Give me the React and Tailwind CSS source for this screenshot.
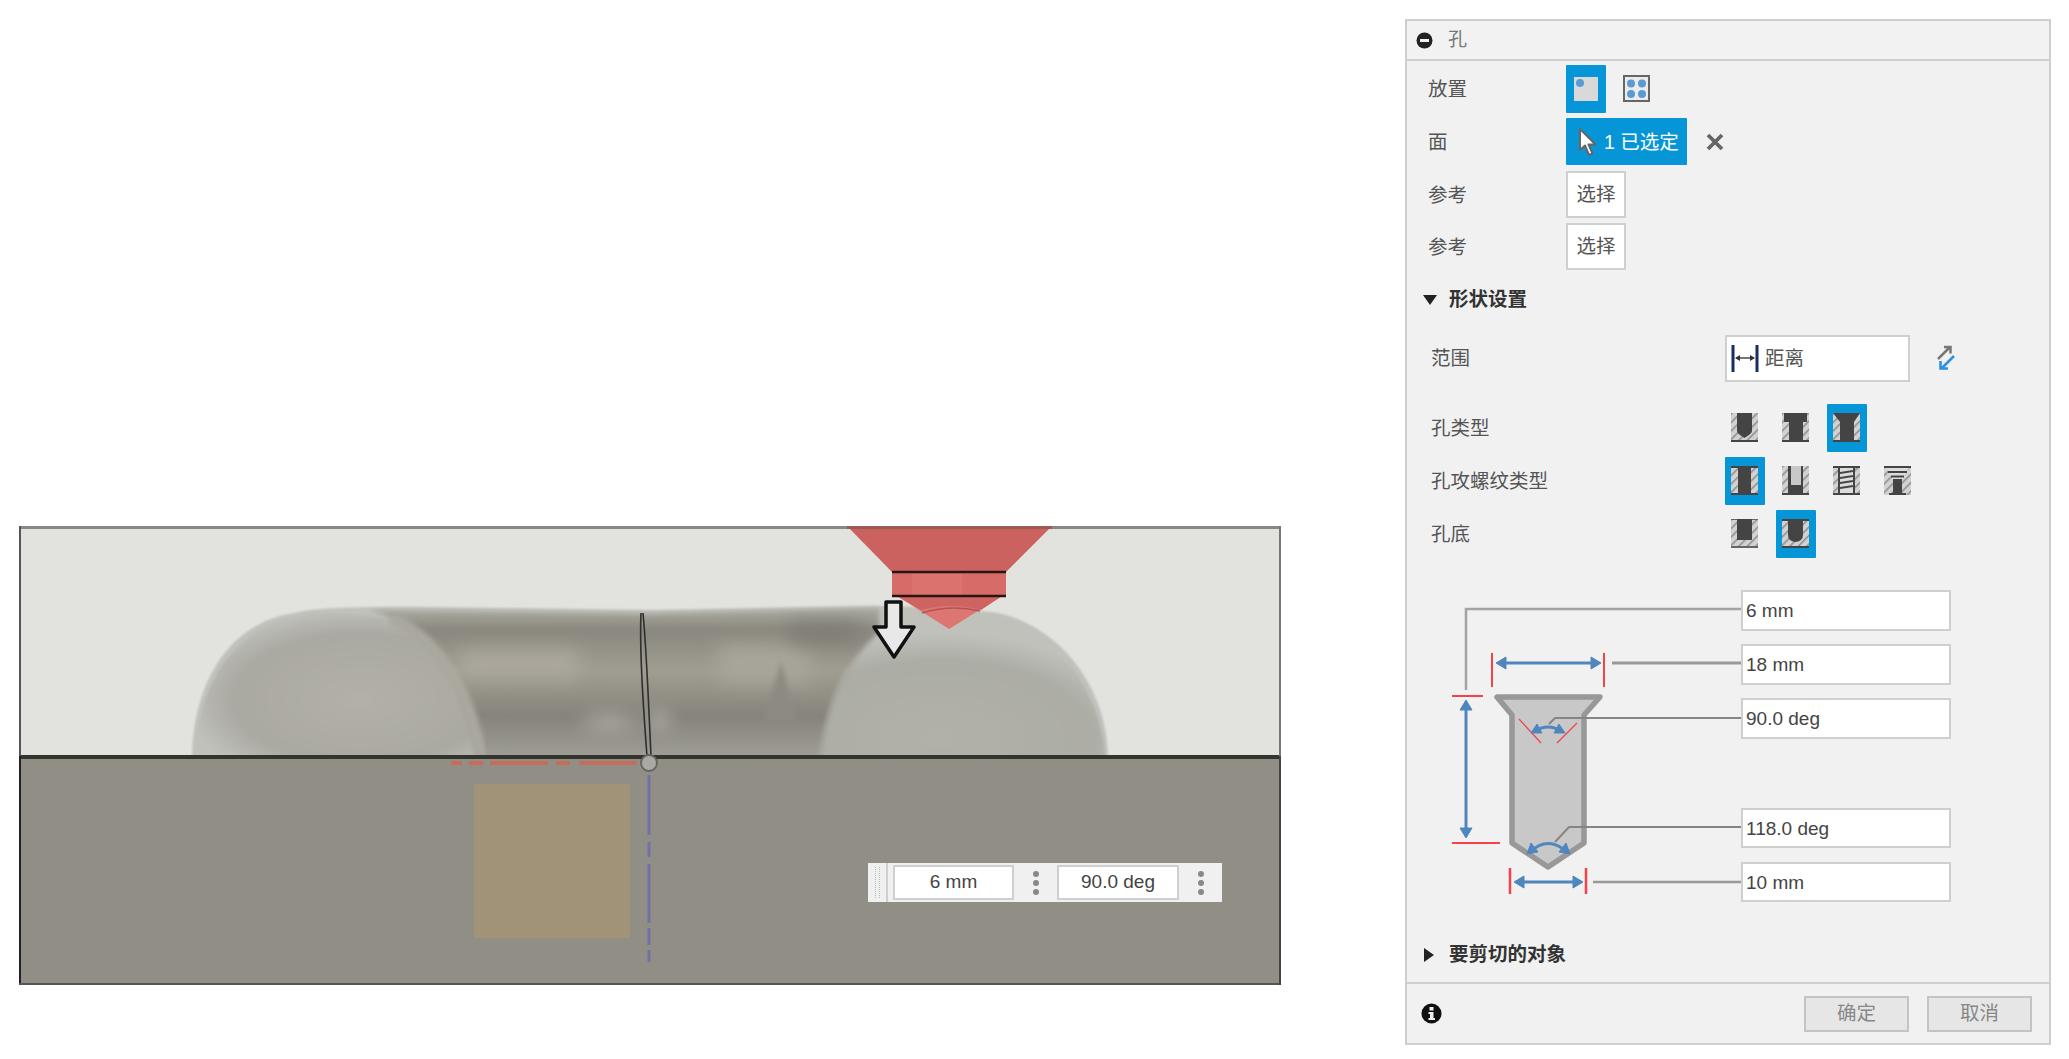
import React from "react";

const FONT = { fontFamily: '"Liberation Sans", "Noto Sans CJK SC", sans-serif' };

// hatched hole glyphs from the hole dialog
const HoleIcon = ({ kind }) => {
  const dark = "#444444";
  return (
    <svg width="27" height="29" viewBox="0 0 27 29" className="block">
      <defs>
        <pattern id={`hatch-${kind}`} width="6" height="6" patternUnits="userSpaceOnUse" patternTransform="rotate(45)">
          <rect width="6" height="6" fill="#d2d2d2" />
          <rect width="1.5" height="6" fill="#8c8c8c" />
        </pattern>
      </defs>
      <rect x="0" y="0" width="27" height="29" fill={`url(#hatch-${kind})`} />
      {kind === "simple" && <path d="M6 0H21V18Q21 20 18 22L13.5 25L9 22Q6 20 6 18Z" fill={dark} />}
      {kind === "counterbore" && <path d="M2 0H25V9H21V27H7V9H2Z" fill={dark} />}
      {kind === "countersink" && <path d="M0 0H27L21 9V27H7V9Z" fill={dark} />}
      {kind === "plain" && <path d="M0 0H27V2H20V27H27V29H0V27H7V2H0Z" fill={dark} />}
      {kind === "clearance" && (
        <>
          <path d="M6 0H21V29H0V27H6Z" fill={dark} />
          <path d="M0 27H27V29H0Z" fill={dark} />
          <rect x="9" y="0" width="10" height="19" fill="#c8c8c8" />
        </>
      )}
      {kind === "tapped" && (
        <>
          <rect x="6" y="0" width="15" height="29" fill="#dcdcdc" />
          <path d="M0 0H27V2H0ZM0 27H27V29H0ZM5 0H7V29H5ZM20 0H22V29H20ZM7 6L20 4V6L7 8ZM7 11L20 9V11L7 13ZM7 16L20 14V16L7 18ZM7 21L20 19V21L7 23Z" fill={dark} />
        </>
      )}
      {kind === "taper" && (
        <>
          <path d="M1 0H26L18 13H9Z" fill="#dcdcdc" />
          <path d="M0 0H27V2H0ZM4 5H23V7H4ZM7 9.500H20V11.500H7ZM9 13H18V27H9ZM5 27H22V29H5Z" fill={dark} />
        </>
      )}
      {kind === "flat" && (
        <>
          <path d="M0 0H27V1H0Z" fill="#666666" />
          <path d="M6 0H21V21H6Z" fill={dark} />
          <rect x="0" y="27" width="27" height="2" fill="#666666" />
        </>
      )}
      {kind === "angled" && (
        <>
          <path d="M0 0H27V2H21V16Q21 22 13.5 23Q6 22 6 16V2H0Z" fill={dark} />
          <rect x="0" y="27" width="27" height="2" fill={dark} />
        </>
      )}
      {(kind === "simple" || kind === "counterbore" || kind === "countersink") && (
        <rect x="0" y="27" width="27" height="2" fill={dark} />
      )}
    </svg>
  );
};

const IconSlot = ({ kind, active, className = "" }) =>
  active ? (
    <div className={`w-10 h-12 bg-[#0696d7] flex items-center justify-center rounded-[1px] shrink-0 ${className}`}>
      <HoleIcon kind={kind} />
    </div>
  ) : (
    <div className={`w-[27px] h-12 flex items-center justify-center shrink-0 ${className}`}>
      <HoleIcon kind={kind} />
    </div>
  );

const SelectRow = ({ label, children }) => (
  <div className="flex items-center h-12 pl-[21px] shrink-0">
    <span className="w-[138px] pt-[2px] text-[19.5px] text-[#555]">{label}</span>
    {children}
  </div>
);

const ValueBox = ({ value, className = "" }) => (
  <div className={`w-[210px] bg-white border-2 border-[#cfcfcf] pl-[3px] pt-[2px] flex items-center text-[19px] text-[#444] ${className}`}>
    {value}
  </div>
);

const Dots = () => (
  <div className="w-[43px] flex flex-col items-center justify-center gap-[3px]">
    <span className="w-[6px] h-[6px] rounded-full bg-[#888]" />
    <span className="w-[6px] h-[6px] rounded-full bg-[#888]" />
    <span className="w-[6px] h-[6px] rounded-full bg-[#888]" />
  </div>
);

const Scene = () => (
  <svg width="1262" height="459" viewBox="0 0 1262 459" className="block">
    <defs>
      <linearGradient id="mid" x1="0" y1="0" x2="0" y2="1">
        <stop offset="0" stopColor="#b3b2aa" />
        <stop offset="0.16" stopColor="#8a887e" />
        <stop offset="0.42" stopColor="#a09d92" />
        <stop offset="0.7" stopColor="#86837b" />
        <stop offset="1" stopColor="#a3a29b" />
      </linearGradient>
      <radialGradient id="lobeL" cx="0.58" cy="0.58" r="0.62">
        <stop offset="0" stopColor="#b3b0a7" />
        <stop offset="0.72" stopColor="#aaa9a2" />
        <stop offset="1" stopColor="#c0c1bb" />
      </radialGradient>
      <radialGradient id="lobeR" cx="0.42" cy="0.85" r="0.72">
        <stop offset="0" stopColor="#b2b1a9" />
        <stop offset="0.75" stopColor="#acada5" />
        <stop offset="1" stopColor="#c0c1bb" />
      </radialGradient>
      <filter id="soft" x="-60%" y="-150%" width="220%" height="400%">
        <feGaussianBlur stdDeviation="9" />
      </filter>
      <filter id="softer">
        <feGaussianBlur stdDeviation="1.2" />
      </filter>
      <filter id="edge" x="-5%" y="-5%" width="110%" height="110%">
        <feGaussianBlur stdDeviation="2.5" />
      </filter>
      <clipPath id="midClip">
        <path d="M350 84C420 105 450 170 459 236H802C805 180 825 140 860 106V82L630 88Z" />
      </clipPath>
      <clipPath id="bodyClip">
        <rect width="1262" height="230" />
      </clipPath>
    </defs>

    <rect width="1262" height="230" fill="#e2e2df" />
    <rect y="230" width="1262" height="229" fill="#918e85" />

    {/* torus silhouette */}
    <g clipPath="url(#bodyClip)">
      <path d="M173 230C175 150 215 95 276 87C295 82 318 81 400 81L630 84L857 80C900 80 960 84 979 87C1040 100 1088 160 1089 230Z" fill="#c0c1bb" filter="url(#softer)" />
      <path d="M176 235C178 155 218 100 280 90C320 85 350 88 379 96C430 125 452 180 462 235Z" fill="url(#lobeL)" filter="url(#softer)" />
      <path d="M800 235C805 180 825 140 857 108C880 92 920 86 979 90C1035 105 1084 165 1086 235Z" fill="url(#lobeR)" filter="url(#softer)" />
      <g filter="url(#edge)">
        <g clipPath="url(#midClip)">
          <rect x="340" y="78" width="530" height="160" fill="url(#mid)" />
          <rect x="440" y="125" width="120" height="26" fill="#aca89d" filter="url(#soft)" />
          <rect x="700" y="120" width="90" height="36" fill="#a8a59a" filter="url(#soft)" />
          <rect x="770" y="96" width="70" height="22" fill="#7f7d75" filter="url(#soft)" />
          <path d="M745 195L762 135L778 195Z" fill="#8c8a82" />
          <ellipse cx="640" cy="194" rx="10" ry="5" fill="#d6d6d0" filter="url(#soft)" />
          <ellipse cx="590" cy="196" rx="26" ry="5" fill="#bdbcb5" filter="url(#soft)" />
        </g>
      </g>
      {/* lighter rim where the lobes meet the band */}
      <path d="M372 92C428 118 452 175 462 232" fill="none" stroke="#aaa89f" strokeWidth="12" filter="url(#edge)" />
    </g>

    {/* red hole preview */}
    <path d="M828 0H1033L987 46H873Z" fill="#cb625f" />
    <rect x="873" y="46" width="114" height="24" fill="#d66b67" />
    <rect x="893" y="48" width="50" height="22" fill="#db726e" />
    <path d="M878 70H983L930 103Z" fill="#dd7673" />
    <path d="M878 70H983L962 84Q932 76 902 84Z" fill="#cd6461" />
    <path d="M903 87Q932 78 961 85" fill="none" stroke="#b25451" strokeWidth="1.5" />
    <path d="M873 46H987M873 70H987" stroke="#2a1513" strokeWidth="2.5" />

    {/* drag arrow */}
    <path d="M867 76H882V101H895L875 131L855 101H867Z" fill="#e8e8e8" stroke="#111" strokeWidth="3.500" strokeLinejoin="round" />

    {/* sketch bits */}
    <rect x="455" y="258" width="156" height="154" fill="#a09377" />
    <path d="M432 237H443M450 237H464M471 237H529M537 237H551M560 237H618" stroke="#c56d58" strokeWidth="4" />
    <path d="M630 249V309M630 316V331M630 338V397M630 402V419M630 424V436" stroke="#7272a8" strokeWidth="3" />
    <path d="M622 87C620 130 625 190 628 230M624 87C628 130 630 190 632 230" fill="none" stroke="#2f2f2b" strokeWidth="1.6" />

    {/* horizon + frame */}
    <rect y="229" width="1262" height="4" fill="#34342f" />
    <circle cx="630" cy="237" r="8" fill="#aaa9a2" stroke="#66665f" strokeWidth="2" />
    <rect width="1262" height="3" fill="#888" />
    <rect x="828" width="205" height="3" fill="#9a5a56" />
    <rect width="2" height="230" fill="#555" />
    <rect y="230" width="2" height="229" fill="#222" />
    <rect y="457" width="1262" height="2" fill="#555" />
    <rect x="1260" width="2" height="230" fill="#777" />
    <rect x="1260" y="230" width="2" height="229" fill="#444" />
  </svg>
);

const Diagram = () => (
  <svg width="334" height="312" viewBox="1407 590 334 312" className="block shrink-0">
    {/* leader lines */}
    <path d="M1741 609H1466V690" fill="none" stroke="#a3a3a3" strokeWidth="2.5" />
    <path d="M1612 663H1741" stroke="#999" strokeWidth="3" />
    {/* hole profile */}
    <path d="M1497 697H1600L1584 715V843L1548 867L1512 843V715Z" fill="#c8c8c8" stroke="#989898" strokeWidth="5.500" strokeLinejoin="round" />
    <path d="M1741 718H1555L1549 724" fill="none" stroke="#858585" strokeWidth="2" />
    <path d="M1741 827H1569L1555 842" fill="none" stroke="#858585" strokeWidth="2" />
    <path d="M1593 882H1741" stroke="#999" strokeWidth="2.5" />
    {/* red limits */}
    <g stroke="#f5424a" fill="none">
      <path d="M1492 653V687M1604 653V687" strokeWidth="2" />
      <path d="M1452 696H1483M1452 843H1500" strokeWidth="2" />
      <path d="M1510 868V894M1586 868V894" strokeWidth="2.5" />
      <path d="M1519 719L1541 743M1577 723L1557 743" strokeWidth="1.3" />
    </g>
    {/* blue dimensions */}
    <g stroke="#4f86bd" fill="#4f86bd">
      <path d="M1500 663H1597" strokeWidth="3" />
      <path d="M1496 663L1506 657V669ZM1601 663L1591 657V669Z" strokeWidth="1" />
      <path d="M1466 704V834" strokeWidth="3" />
      <path d="M1466 700L1460 710H1472ZM1466 838L1460 828H1472Z" strokeWidth="1" />
      <path d="M1518 882H1579" strokeWidth="3" />
      <path d="M1514 882L1524 876V888ZM1583 882L1573 876V888Z" strokeWidth="1" />
      <path d="M1535 731Q1548 723 1561 731" fill="none" strokeWidth="3" />
      <path d="M1531 733L1537 724L1542 733ZM1565 733L1559 724L1554 733Z" strokeWidth="1" />
      <path d="M1530 852Q1548 835 1567 852" fill="none" strokeWidth="3" />
      <path d="M1527 854L1531 843L1538 852ZM1570 854L1566 843L1559 852Z" strokeWidth="1" />
    </g>
  </svg>
);

export default function App() {
  return (
    <div className="w-[2069px] h-[1059px] bg-white flex overflow-hidden" style={FONT}>
      {/* 3d viewport */}
      <div className="w-[1405px] pl-[19px] pt-[526px] shrink-0">
        <div className="relative w-[1262px] h-[459px]">
          <Scene />
          <div className="absolute left-[849px] top-[337px] w-[354px] h-[39px] bg-[#f0f0f0] flex items-center text-[19px] text-[#444]">
            <div className="w-[18px] h-full flex justify-center py-1">
              <div className="w-[5px] h-full border-x border-dotted border-[#bbb]" />
            </div>
            <div className="w-[2px] h-full bg-[#cfcfcf]" />
            <div className="ml-[5px] w-[121px] h-[35px] bg-white border-2 border-[#cfcfcf] flex items-center justify-center">6 mm</div>
            <Dots />
            <div className="w-[122px] h-[35px] bg-white border-2 border-[#cfcfcf] flex items-center justify-center">90.0 deg</div>
            <Dots />
          </div>
        </div>
      </div>

      {/* hole dialog */}
      <div className="mt-[19px] w-[646px] h-[1026px] flex flex-col shrink-0">
        <div className="h-[42px] bg-[#f2f2f2] border-2 border-[#cfcfcf] flex items-center pl-[9px] shrink-0">
          <svg width="17" height="17" viewBox="0 0 17 17" className="shrink-0">
            <circle cx="8.5" cy="8.5" r="8" fill="#222" />
            <rect x="4" y="7" width="9" height="3" fill="#f2f2f2" />
          </svg>
          <span className="ml-[15px] pt-[1px] text-[19px] text-[#777]">孔</span>
        </div>

        <div className="flex-1 bg-[#f1f1f1] border-x-2 border-[#cfcfcf] flex flex-col pt-1">
          <div className="flex flex-col gap-[4.67px]">
            <SelectRow label="放置">
              <div className="w-10 h-12 bg-[#0696d7] rounded-[1px] flex items-center justify-center">
                <svg width="24" height="24" viewBox="0 0 24 24">
                  <rect width="24" height="24" fill="#d9d9d9" />
                  <circle cx="6" cy="6" r="4" fill="#5b9bd5" />
                </svg>
              </div>
              <svg width="27" height="27" viewBox="0 0 27 27" className="ml-[17px] -mt-[1px]">
                <rect x="1" y="1" width="25" height="25" fill="#ececec" stroke="#666" strokeWidth="2" />
                <g fill="#5b9bd5">
                  <circle cx="8" cy="8.5" r="4" />
                  <circle cx="19" cy="8.5" r="4" />
                  <circle cx="8" cy="19" r="4" />
                  <circle cx="19" cy="19" r="4" />
                </g>
              </svg>
            </SelectRow>
            <SelectRow label="面">
              <div className="w-[121px] h-[47px] bg-[#0696d7] rounded-[1px] flex items-center pl-[12px] text-white text-[19.5px]">
                <svg width="19" height="29" viewBox="0 0 19 29" className="shrink-0">
                  <path d="M2 2V23L7 18.500L11 28L14.500 26.500L10.500 17.500H17.500Z" fill="#fff" stroke="#666" strokeWidth="2" strokeLinejoin="round" />
                </svg>
                <span className="ml-[7px] pt-[1px] whitespace-nowrap">1 已选定</span>
              </div>
              <svg width="18" height="18" viewBox="0 0 18 18" className="ml-[19px]">
                <path d="M2 2L16 16M16 2L2 16" stroke="#666" strokeWidth="3.800" />
              </svg>
            </SelectRow>
            <SelectRow label="参考">
              <div className="w-[60px] h-[47px] bg-white border-2 border-[#cfcfcf] flex items-center justify-center text-[19.5px] text-[#555]">选择</div>
            </SelectRow>
            <SelectRow label="参考">
              <div className="w-[60px] h-[47px] bg-white border-2 border-[#cfcfcf] flex items-center justify-center text-[19.5px] text-[#555]">选择</div>
            </SelectRow>
          </div>

          <div className="mt-[15px] h-7 flex items-center pl-[16px] shrink-0">
            <span className="w-0 h-0 border-x-[7px] border-x-transparent border-t-[10px] border-t-[#222]" />
            <span className="ml-[12px] text-[19.5px] font-bold text-[#333]">形状设置</span>
          </div>

          <div className="mt-[21px] h-[47px] flex items-center pl-[24px] shrink-0">
            <span className="w-[294px] text-[19.5px] text-[#555]">范围</span>
            <div className="w-[185px] h-[47px] bg-white border-2 border-[#cfcfcf] flex items-center pl-[4px]">
              <svg width="28" height="28" viewBox="0 0 28 28" className="shrink-0">
                <path d="M2 1V28M26 1V28" stroke="#14305f" strokeWidth="3" />
                <path d="M5 14H23" stroke="#444" strokeWidth="1.500" />
                <path d="M4 14L9 11V17ZM24 14L19 11V17Z" fill="#333" />
              </svg>
              <span className="ml-[6px] text-[19.5px] text-[#555]">距离</span>
            </div>
            <svg width="20" height="26" viewBox="0 0 20 26" className="ml-[26px] -mt-[1px]">
              <path d="M2 14L13 3M8 2H14.500V8.500" fill="none" stroke="#777" strokeWidth="2.500" />
              <path d="M18 11L6 23M4.500 16V23.500H12" fill="none" stroke="#2c8fe0" strokeWidth="2.500" />
            </svg>
          </div>

          <div className="mt-[22px] h-12 flex items-center pl-[24px] shrink-0">
            <span className="w-[299.5px] pt-[2px] text-[19.5px] text-[#555]">孔类型</span>
            <IconSlot kind="simple" />
            <IconSlot kind="counterbore" className="ml-[24px]" />
            <IconSlot kind="countersink" active className="ml-[18px]" />
          </div>
          <div className="mt-[5px] h-12 flex items-center pl-[24px] shrink-0">
            <span className="w-[293.5px] pt-[2px] text-[19.5px] text-[#555]">孔攻螺纹类型</span>
            <IconSlot kind="plain" active />
            <IconSlot kind="clearance" className="ml-[17px]" />
            <IconSlot kind="tapped" className="ml-[24px]" />
            <IconSlot kind="taper" className="ml-[24px]" />
          </div>
          <div className="mt-[5px] h-12 flex items-center pl-[24px] shrink-0">
            <span className="w-[299.5px] pt-[2px] text-[19.5px] text-[#555]">孔底</span>
            <IconSlot kind="flat" />
            <IconSlot kind="angled" active className="ml-[18px]" />
          </div>

          <div className="mt-[32px] flex shrink-0">
            <Diagram />
            <div className="flex flex-col">
              <ValueBox value="6 mm" className="h-[41px]" />
              <ValueBox value="18 mm" className="h-[41px] mt-[13px]" />
              <ValueBox value="90.0 deg" className="h-[41px] mt-[13px]" />
              <ValueBox value="118.0 deg" className="h-[40px] mt-[69px]" />
              <ValueBox value="10 mm" className="h-[40px] mt-[14px]" />
            </div>
          </div>

          <div className="mt-[39px] h-7 flex items-center pl-[17px] shrink-0">
            <span className="w-0 h-0 border-y-[7px] border-y-transparent border-l-[10px] border-l-[#222]" />
            <span className="ml-[15px] text-[19.5px] font-bold text-[#333]">要剪切的对象</span>
          </div>
        </div>

        <div className="h-[63px] bg-[#f1f1f1] border-2 border-[#cfcfcf] flex items-center pl-[14px] pr-[17px] shrink-0">
          <svg width="21" height="21" viewBox="0 0 21 21" className="shrink-0">
            <circle cx="10.500" cy="10.500" r="10" fill="#111" />
            <rect x="8.500" y="4" width="4" height="3.500" fill="#f1f1f1" />
            <path d="M7.500 9H12.500V15H14V17H7.500V15H9V11H7.500Z" fill="#f1f1f1" />
          </svg>
          <div className="ml-auto flex gap-[18px]">
            <div className="w-[105px] h-9 pt-[1px] bg-[#e6e6e6] border-2 border-[#c4c4c4] flex items-center justify-center text-[19.5px] text-[#888]">确定</div>
            <div className="w-[105px] h-9 pt-[1px] bg-[#e6e6e6] border-2 border-[#c4c4c4] flex items-center justify-center text-[19.5px] text-[#888]">取消</div>
          </div>
        </div>
      </div>
    </div>
  );
}
